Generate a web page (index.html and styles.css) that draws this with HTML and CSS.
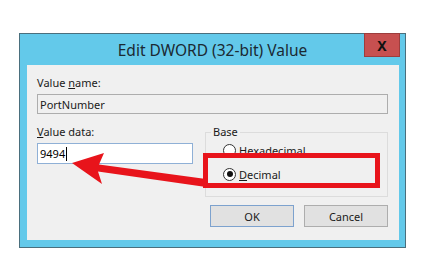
FILE: index.html
```html
<!DOCTYPE html>
<html lang="en">
<head>
    <meta charset="UTF-8">
    <title>Edit DWORD (32-bit) Value</title>
    <link rel="stylesheet" href="styles.css">
</head>
<body>
    <div class="window">
        <div class="titlebar">
            <span class="title">Edit DWORD (32-bit) Value</span>
            <span class="close-btn">X</span>
        </div>
        <div class="client">
            <div class="label">Value <u>n</u>ame:</div>
            <div class="field field-readonly">PortNumber</div>

            <div class="data-row">
                <div class="data-col">
                    <div class="label"><u>V</u>alue data:</div>
                    <div class="field field-input">9494<span class="caret"></span></div>
                </div>
                <fieldset class="base-group">
                    <legend>Base</legend>
                    <div class="radio-row">
                        <span class="radio"></span><span><u>H</u>exadecimal</span>
                    </div>
                    <div class="radio-row">
                        <span class="radio radio-checked"></span><span><u>D</u>ecimal</span>
                    </div>
                </fieldset>
            </div>

            <div class="button-row">
                <button class="dlg-button dlg-button-default">OK</button>
                <button class="dlg-button">Cancel</button>
            </div>
        </div>
    </div>

    <!-- annotation drawn over the dialog -->
    <svg class="markup" width="431" height="277" viewBox="0 0 431 277">
        <rect x="205.5" y="155.5" width="172" height="30" fill="none" stroke="#e8141b" stroke-width="5"/>
        <polygon fill="#e8141b" points="72,163 104,153 99,164.5 206,179 206,187 98,171.5 102,184"/>
    </svg>
</body>
</html>
```

FILE: styles.css
```css
/* Base */
* {
    margin: 0;
    padding: 0;
    box-sizing: border-box;
}

body {
    font-family: "Noto Sans", "Open Sans", Arial, sans-serif;
    font-size: 11px;
    color: #1a1a1a;
    background-color: white;
    width: 431px;
    height: 277px;
    overflow: hidden;
    position: relative;
}

/* Window frame */
.window {
    margin: 33px 0 0 19px;
    width: 387px;
    height: 215px;
    background-color: #63c9ea;
    border: 1px solid #4a6f7d;
    display: flex;
    flex-direction: column;
}

.titlebar {
    height: 31px;
    position: relative;
    display: flex;
    justify-content: center;
    align-items: center;
}

.title {
    font-size: 15.5px;
    color: #1b2a33;
    margin-top: 1px;
}

.close-btn {
    position: absolute;
    top: -1px;
    right: 5px;
    width: 36px;
    height: 24px;
    background-color: #c75050;
    border: 1px solid #9d3d3d;
    color: #111;
    font-weight: 700;
    font-size: 14px;
    display: flex;
    align-items: center;
    justify-content: center;
}

.client {
    flex: 1;
    margin: 0 6px 7px 7px;
    background-color: #f0f0f0;
    padding: 11px 11px 0 10px;
}

/* Labels and fields */
.label {
    line-height: 14px;
    height: 14px;
}

.field {
    margin-top: 4px;
    padding-left: 2px;
    display: flex;
    align-items: center;
}

.field-readonly {
    height: 20px;
    border: 1px solid #adadad;
    background-color: #f0f0f0;
}

.field-input {
    width: 156px;
    height: 21px;
    border: 1px solid #8fb0d6;
    background-color: white;
    color: #000;
}

.caret {
    display: inline-block;
    width: 1px;
    height: 14px;
    background-color: #000;
    margin-left: 1px;
}

/* Data row */
.data-row {
    margin-top: 11px;
    display: flex;
}

.data-col {
    width: 168px;
}

.base-group {
    width: 183px;
    height: 72px;
    border: 1px solid #dcdcdc;
    padding: 0 0 0 17px;
}

.base-group legend {
    margin-left: -12px;
    padding: 0 2px;
    line-height: 14px;
}

.radio-row {
    display: flex;
    align-items: center;
    gap: 3px;
    height: 22px;
    margin-bottom: 2px;
}

.radio {
    width: 13px;
    height: 13px;
    border-radius: 50%;
    border: 1px solid #333;
    background-color: white;
    display: flex;
    align-items: center;
    justify-content: center;
}

.radio-checked::after {
    content: "";
    width: 6px;
    height: 6px;
    border-radius: 50%;
    background-color: #111;
}

/* Buttons */
.button-row {
    margin-top: 8px;
    display: flex;
    justify-content: flex-end;
    gap: 10px;
}

.dlg-button {
    width: 84px;
    height: 22px;
    font-family: inherit;
    font-size: 11px;
    color: #1a1a1a;
    background-color: #e1e1e1;
    border: 1px solid #adadad;
}

.dlg-button-default {
    border-color: #7da2ce;
}

/* Annotation overlay */
.markup {
    position: absolute;
    left: 0;
    top: 0;
}
```
